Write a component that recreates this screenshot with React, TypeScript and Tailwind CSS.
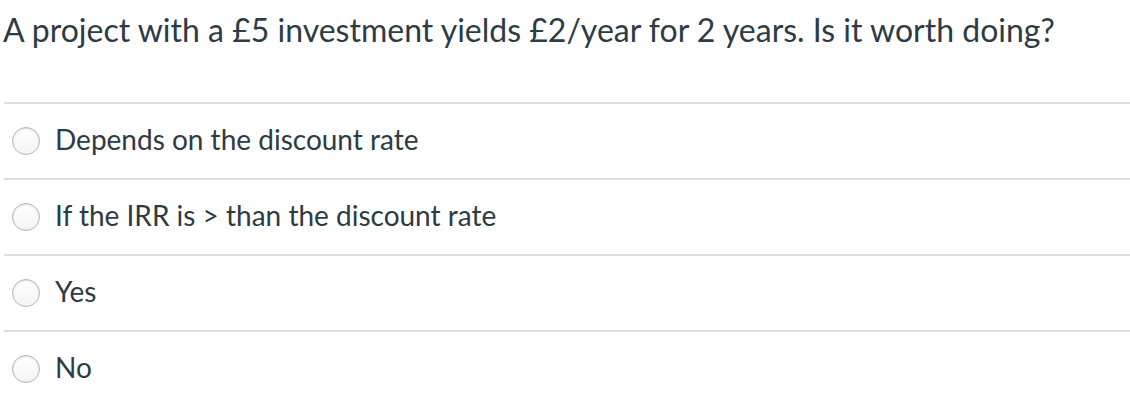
import React from "react";

const options = [
  "Depends on the discount rate",
  "If the IRR is > than the discount rate",
  "Yes",
  "No",
];

export default function App() {
  return (
    <div className="w-[1130px] h-[420px] bg-white text-[#2d3b45]" style={{ fontFamily: "Lato, 'Noto Sans', sans-serif" }}>
      <div className="pl-[3px] pt-[10px] h-[102px]">
        <p className="text-[32px] leading-[40px]">
          A project with a £5 investment yields £2/year for 2 years. Is it worth doing?
        </p>
      </div>
      <div className="ml-[4px]">
        {options.map((o) => (
          <div key={o} className="border-t-2 border-[#dddddd] h-[76px] flex items-center">
            <span className="ml-[8px] w-[28px] h-[28px] rounded-full border border-[#b5b5b5] bg-gradient-to-b from-white to-[#f4f4f4] shadow-[inset_0_1px_2px_rgba(0,0,0,0.12)]" />
            <span className="ml-[15px] text-[28px] leading-[34px] pb-[5px]">{o}</span>
          </div>
        ))}
      </div>
    </div>
  );
}
